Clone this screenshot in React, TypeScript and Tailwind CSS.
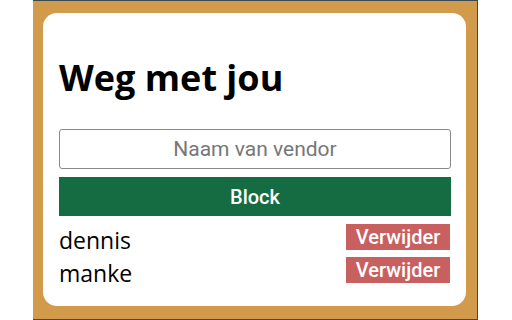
import React from "react";

export default function App() {
  const items = ["dennis", "manke"];
  return (
    <div className="w-[512px] h-[320px] bg-white">
      <div className="ml-[33px] w-[445px] h-[320px] bg-[#d29a4b] border-t border-r border-b border-[#3a4a55] pt-[12px] pl-[10px] pr-[11px] pb-[13px]">
        <div className="h-full bg-white rounded-[14px] px-[16px] pt-[45px]">
          <h1 className="text-[36px] leading-[40px] font-bold text-black mb-[31px]" style={{ fontFamily: '"Open Sans", sans-serif' }}>
            Weg met jou
          </h1>
          <input
            placeholder="Naam van vendor"
            className="block w-[392px] h-[40px] border border-[#8a8a8a] rounded-[3px] text-center text-[21px] placeholder:text-[#777] outline-none"
            style={{ fontFamily: 'Roboto, "Liberation Sans", sans-serif' }}
          />
          <button
            className="block mt-[8px] w-[392px] h-[39px] bg-[#166c42] text-white text-[20px] font-medium"
            style={{ fontFamily: 'Roboto, "Liberation Sans", sans-serif' }}
          >
            Block
          </button>
          <ul className="mt-[8px]">
            {items.map((it) => (
              <li key={it} className="flex justify-between items-start h-[33px] w-[391px]">
                <span className="text-[23px] leading-[33px] text-black" style={{ fontFamily: '"Open Sans", sans-serif' }}>{it}</span>
                <button
                  className="w-[104px] h-[26px] bg-[#c96060] text-white text-[20px] font-medium leading-[26px]"
                  style={{ fontFamily: 'Roboto, "Liberation Sans", sans-serif' }}
                >
                  Verwijder
                </button>
              </li>
            ))}
          </ul>
        </div>
      </div>
    </div>
  );
}
